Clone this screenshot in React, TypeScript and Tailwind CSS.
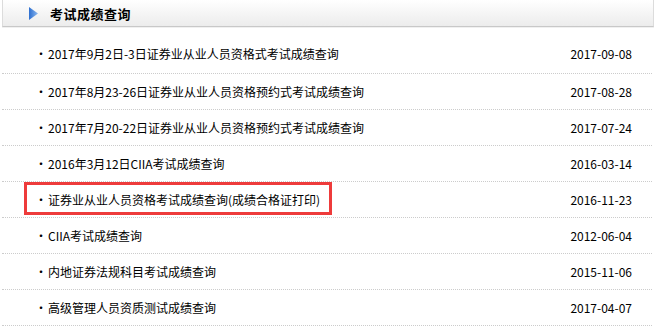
const rows = [
  { title: '2017年9月2日-3日证券业从业人员资格式考试成绩查询', date: '2017-09-08' },
  { title: '2017年8月23-26日证券业从业人员资格预约式考试成绩查询', date: '2017-08-28' },
  { title: '2017年7月20-22日证券业从业人员资格预约式考试成绩查询', date: '2017-07-24' },
  { title: '2016年3月12日CIIA考试成绩查询', date: '2016-03-14' },
  { title: '证券业从业人员资格考试成绩查询(成绩合格证打印)', date: '2016-11-23', marked: true },
  { title: 'CIIA考试成绩查询', date: '2012-06-04' },
  { title: '内地证券法规科目考试成绩查询', date: '2015-11-06' },
  { title: '高级管理人员资质测试成绩查询', date: '2017-04-07' },
];

const font = { fontFamily: '"SimSun", "Noto Sans CJK SC", "Liberation Sans", sans-serif' };

export default function App() {
  return (
    <div className="w-[655px] h-[332px] bg-white overflow-hidden" style={font}>
      <div className="ml-[2px] mr-px h-[27px] flex items-center border border-t-0 border-[#dcdcdc] border-b-[#c8c8c8] bg-gradient-to-b from-white to-[#ececec] shadow-[0_1px_0_#f0f0f0]">
        <svg width="9" height="13" viewBox="0 0 9 13" className="ml-[26px]">
          <defs>
            <linearGradient id="tri" x1="0" y1="0" x2="1" y2="0">
              <stop offset="0" stopColor="#2d6fd0" />
              <stop offset="1" stopColor="#8cb8ee" />
            </linearGradient>
          </defs>
          <path d="M0 0 L9 6.5 L0 13 Z" fill="url(#tri)" />
        </svg>
        <span className="ml-[12px] text-[13px] font-bold text-black leading-none tracking-[0.5px]">
          考试成绩查询
        </span>
      </div>

      <ul className="mt-[7px] ml-[2px] mr-[3px]">
        {rows.map((r) => (
          <li
            key={r.date + r.title}
            className="relative h-[36px] first:h-[40px] flex items-center border-b border-dotted border-[#cccccc] text-[12px] text-black"
          >
            <span className="ml-[33px] w-[13px] text-[12px] leading-none">·</span>
            <span className="leading-none">{r.title}</span>
            <span className="ml-auto mr-[20px] leading-none">{r.date}</span>
            {r.marked && (
              <span className="absolute left-[22px] top-0 w-[308px] h-[33px] border-[3px] border-[#ee3b3b]" />
            )}
          </li>
        ))}
      </ul>
    </div>
  );
}
